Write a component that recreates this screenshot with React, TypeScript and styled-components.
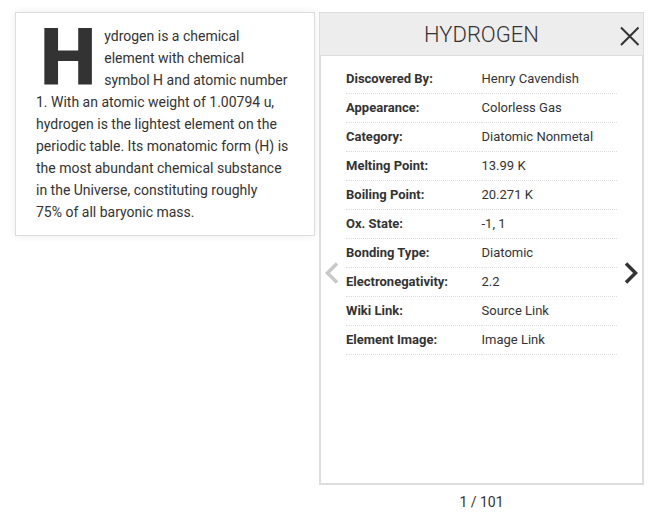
import React from "react";
import styled, { createGlobalStyle } from "styled-components";

const GlobalStyle = createGlobalStyle`
  * { box-sizing: border-box; }
  body {
    margin: 0;
    background: #fff;
    color: #333;
    font-family: Roboto, "Liberation Sans", sans-serif;
    font-size: 14px;
  }
`;

const Page = styled.main`
  display: grid;
  grid-template-columns: 12fr 13fr;
  align-items: start;
  gap: 4px;
  padding: 12px 12px 0 15px;
`;

const SummaryCard = styled.article`
  padding: 12px 20px;
  border: 1px solid #ddd;
  box-shadow: 0 0 8px rgba(0, 0, 0, 0.08);
`;

const Summary = styled.p`
  margin: 0;
  line-height: 22px;
`;

const DropCap = styled.span`
  float: left;
  padding: 0 8px 0 4px;
  font-size: 80px;
  line-height: 66px;
  font-weight: 900;
`;

const Header = styled.header`
  position: relative;
  display: flex;
  justify-content: center;
  align-items: center;
  height: 44px;
  padding-top: 2px;
  background: #ededed;
  border: 1px solid #ddd;
`;

const Title = styled.h1`
  margin: 0;
  font-size: 22px;
  line-height: 24px;
  font-weight: 300;
  text-transform: uppercase;
`;

const IconButton = styled.button`
  position: absolute;
  display: flex;
  padding: 0;
  border: 0;
  background: none;
  color: #333;
  cursor: pointer;

  &:disabled {
    color: #c8c8c8;
    cursor: default;
  }
`;

const CloseButton = styled(IconButton)`
  right: 3px;
  top: 13px;
`;

const ArrowButton = styled(IconButton)<{ $side: "left" | "right" }>`
  top: 206px;
  ${(p) => p.$side}: 4px;
`;

const Body = styled.div`
  position: relative;
  min-height: 429px;
  padding: 9px 25px;
  border: 2px solid #ddd;
  border-top: 0;
`;

const Facts = styled.table`
  width: 100%;
  table-layout: fixed;
  border-collapse: separate;
  border-spacing: 0;
  font-size: 13px;
  line-height: 16px;
  text-align: left;
`;

const Label = styled.th`
  width: 50%;
  padding: 6px 0;
  border-bottom: 1px dotted #ddd;
  font-weight: 700;
`;

const Value = styled.td`
  padding: 6px 0;
  border-bottom: 1px dotted #ddd;
`;

const FactLink = styled.a`
  color: inherit;
  text-decoration: none;
`;

const Counter = styled.p`
  margin: 8px 0 0;
  line-height: 18px;
  text-align: center;
`;

const facts: { label: string; value: string; href?: string }[] = [
  { label: "Discovered By:", value: "Henry Cavendish" },
  { label: "Appearance:", value: "Colorless Gas" },
  { label: "Category:", value: "Diatomic Nonmetal" },
  { label: "Melting Point:", value: "13.99 K" },
  { label: "Boiling Point:", value: "20.271 K" },
  { label: "Ox. State:", value: "-1, 1" },
  { label: "Bonding Type:", value: "Diatomic" },
  { label: "Electronegativity:", value: "2.2" },
  { label: "Wiki Link:", value: "Source Link", href: "#source" },
  { label: "Element Image:", value: "Image Link", href: "#image" },
];

export default function App() {
  return (
    <>
      <GlobalStyle />
      <Page>
        <SummaryCard>
          <Summary>
            <DropCap>H</DropCap>ydrogen is a chemical
            <br />
            element with chemical
            <br />
            symbol H and atomic number
            <br />
            1. With an atomic weight of 1.00794 u,
            <br />
            hydrogen is the lightest element on the
            <br />
            periodic table. Its monatomic form (H) is
            <br />
            the most abundant chemical substance
            <br />
            in the Universe, constituting roughly
            <br />
            75% of all baryonic mass.
          </Summary>
        </SummaryCard>
        <section>
          <Header>
            <Title>Hydrogen</Title>
            <CloseButton type="button" aria-label="Close">
              <svg width="20" height="20" viewBox="0 0 20 20" fill="none" stroke="currentColor" strokeWidth="2">
                <path d="M1 1.5 18.5 19M18.5 1.5 1 19" />
              </svg>
            </CloseButton>
          </Header>
          <Body>
            <Facts>
              <tbody>
                {facts.map((fact) => (
                  <tr key={fact.label}>
                    <Label scope="row">{fact.label}</Label>
                    <Value>
                      {fact.href ? (
                        <FactLink href={fact.href}>{fact.value}</FactLink>
                      ) : (
                        fact.value
                      )}
                    </Value>
                  </tr>
                ))}
              </tbody>
            </Facts>
            <ArrowButton type="button" $side="left" aria-label="Previous element" disabled>
              <svg width="14" height="22" viewBox="0 0 14 22" fill="none" stroke="currentColor" strokeWidth="3.5">
                <path d="M12 1.5 2.5 11 12 20.5" />
              </svg>
            </ArrowButton>
            <ArrowButton type="button" $side="right" aria-label="Next element">
              <svg width="14" height="22" viewBox="0 0 14 22" fill="none" stroke="currentColor" strokeWidth="3.5">
                <path d="M2 1.5 11.5 11 2 20.5" />
              </svg>
            </ArrowButton>
          </Body>
          <Counter>1 / 101</Counter>
        </section>
      </Page>
    </>
  );
}
